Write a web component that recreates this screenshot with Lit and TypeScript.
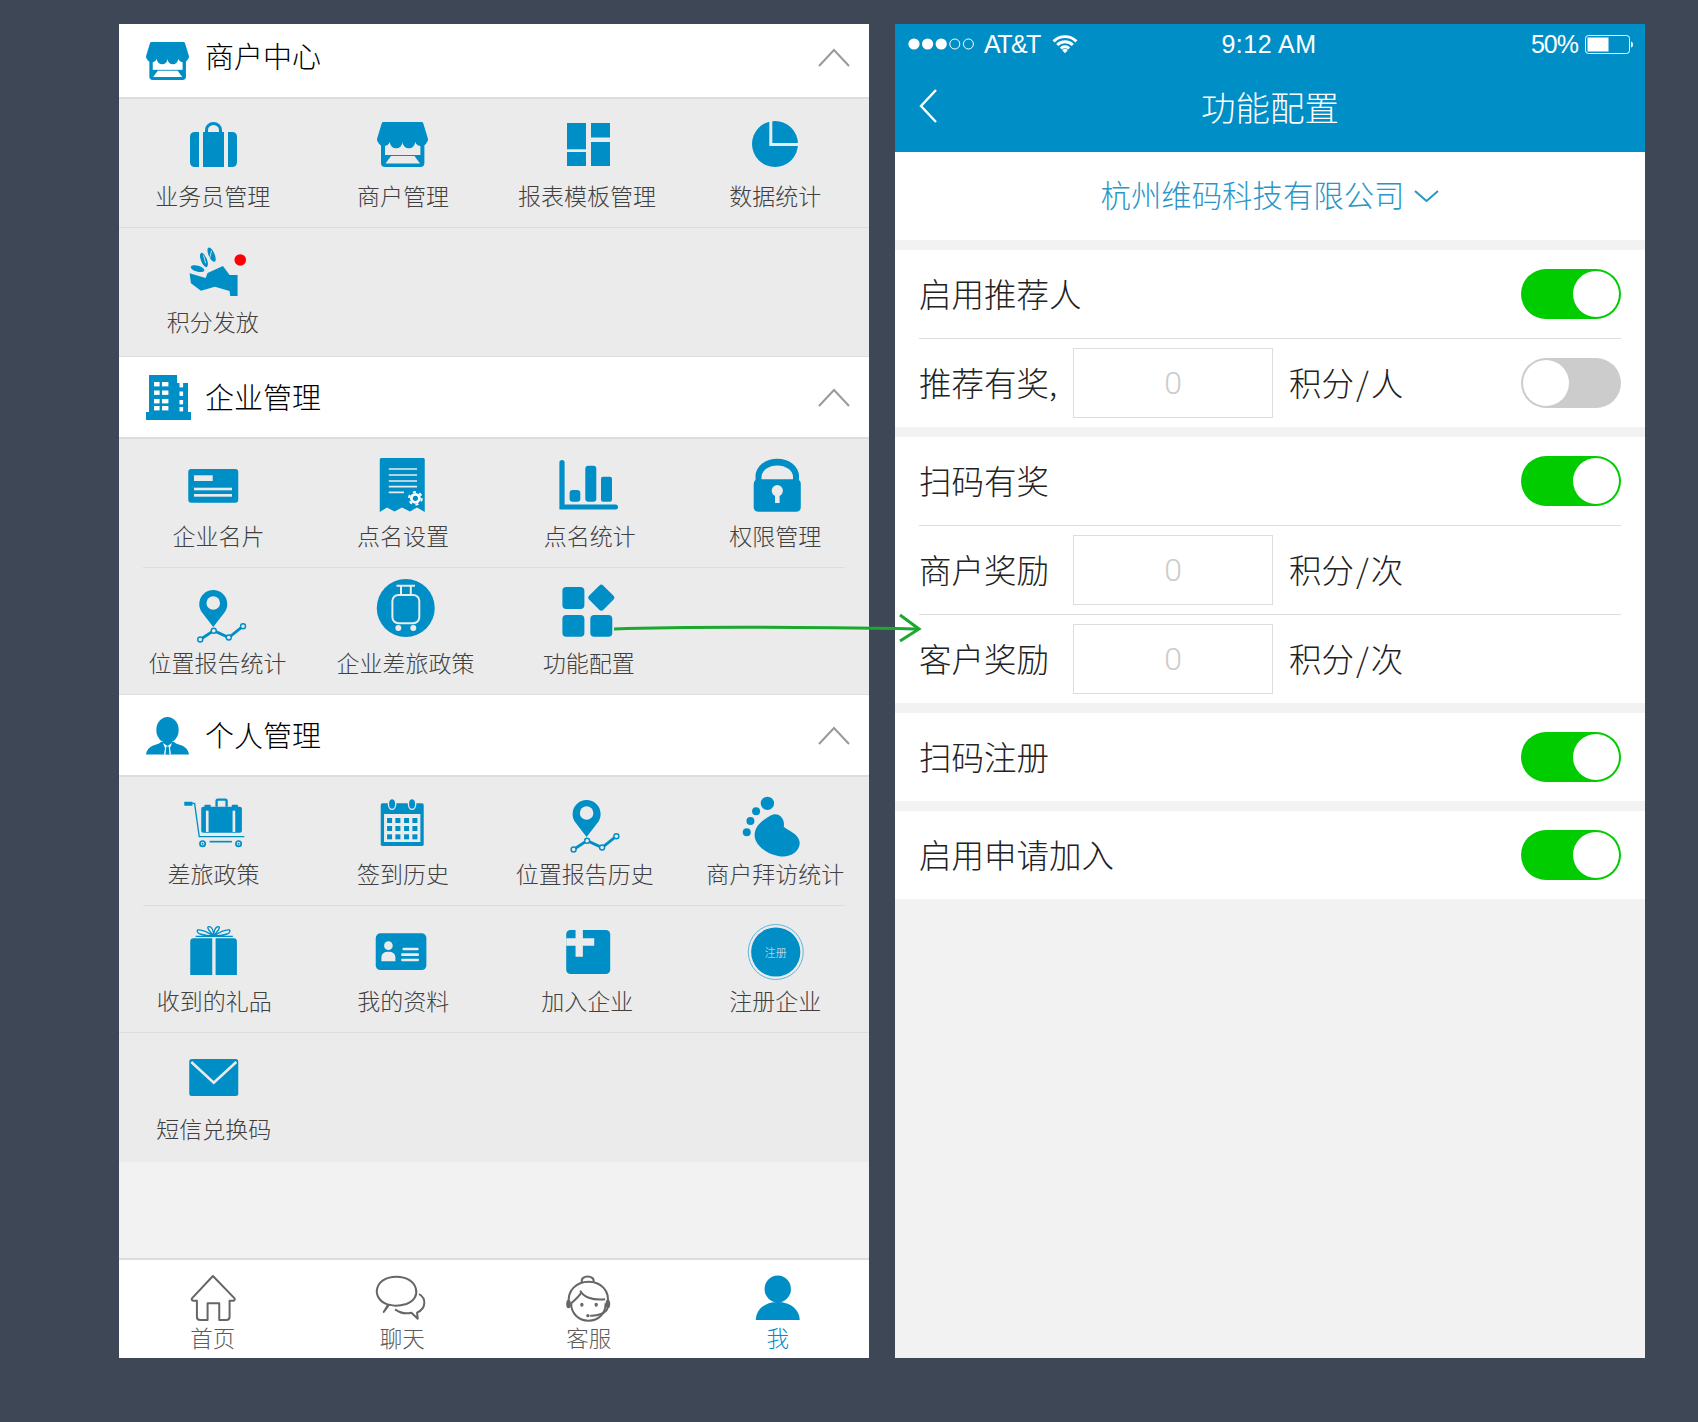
import { LitElement, html, svg, css } from 'lit';
import { customElement } from 'lit/decorators.js';

// the shop front, drawn in a 51x45 box
const shop = svg`
  <rect class="b" x="4" y="14" width="43.4" height="31" rx="4"></rect>
  <rect class="c" x="8" y="18" width="35.4" height="15"></rect>
  <path class="c" d="M8.5 41.5H43L37.5 34H14Z"></path>
  <path class="b" d="M6 0H45Q46 0 46.5 2L51 17Q51 20 50 20A6.3 6.3 0 0 1 38.2 20A6.3 6.3 0 0 1 25.5 20A6.3 6.3 0 0 1 12.8 20A6.3 6.3 0 0 1 1 20Q0 20 0 17L4.5 2Q5 0 6 0Z"></path>`;

// pin with the little route under it, cx / top give the pin's place
const pinRoute = (cx: number, top: number) => svg`
  <g transform="translate(${cx} ${top})">
    <path class="b" d="M0 37L-11 22.7A14 14 0 1 1 11 22.7Z"></path>
    <circle class="c" cy="13" r="6.8"></circle>
    <path class="ln" stroke-width="2.8" d="M-13 49.5L0.5 40.7L15.5 47.5L29.8 36.2"></path>
    <g class="dot">
      <circle cx="-13" cy="49.5" r="2.5"></circle><circle cx="0.5" cy="40.7" r="2.5"></circle>
      <circle cx="15.5" cy="47.5" r="2.5"></circle><circle cx="29.8" cy="36.2" r="2.5"></circle>
    </g>
  </g>`;

const icons: Record<string, unknown> = {
  bag: svg`
    <path class="ln" stroke-width="3" d="M33.5 19V16A7 6.5 0 0 1 47.5 16V19"></path>
    <rect class="b" x="30" y="18" width="21" height="35"></rect>
    <path class="b" d="M26 18V53H22Q17 53 17 48V23Q17 18 22 18ZM55 18V53H59Q64 53 64 48V23Q64 18 59 18Z"></path>`,
  store: svg`<g transform="translate(17 8)">${shop}</g>`,
  template: svg`
    <rect class="b" x="19" y="9" width="19" height="26.3"></rect>
    <rect class="b" x="19" y="38" width="19" height="14"></rect>
    <rect class="b" x="43" y="9" width="19" height="14.5"></rect>
    <rect class="b" x="43" y="28" width="19" height="24"></rect>`,
  pie: svg`
    <circle class="b" cx="40" cy="30" r="23"></circle>
    <path class="cs" stroke-width="3" d="M35.8 4V30.5H66"></path>`,
  hand: svg`
    <g transform="translate(7.25 0) scale(.3333)">
      <path class="b" d="M28 100L48 106L76 114L82 99L128 78L148 105H172V168H150L148 153L104 140L62 152L32 130Z"></path>
      <ellipse class="b" cx="52" cy="86" rx="21" ry="9" transform="rotate(15 52 86)"></ellipse>
      <ellipse class="b" cx="71" cy="60" rx="23" ry="9" transform="rotate(68 71 60)"></ellipse>
      <ellipse class="b" cx="94" cy="44" rx="23" ry="9" transform="rotate(66 94 44)"></ellipse>
      <path class="cs" stroke-width="2.5" d="M70 46L76 70M94 32L88 56"></path>
      <circle cx="180" cy="60" r="17.5" fill="#ff0000"></circle>
    </g>`,
  card: svg`
    <rect class="b" x="15.25" y="16" width="50" height="33.7" rx="3"></rect>
    <rect class="c" x="21" y="22.3" width="18.7" height="5.7"></rect>
    <rect class="c" x="21" y="34.7" width="38" height="2.6"></rect>
    <rect class="c" x="21" y="41" width="38" height="2.7"></rect>`,
  receipt: svg`
    <path class="b" d="M21 5H63.5Q64.75 5 64.75 6.5V59L57 54.5L50 58.5L42 54.5L34.5 58.5L27 54.5L19.75 59V6.5Q19.75 5 21 5Z"></path>
    <path class="cs" stroke-width="1.7" d="M28.75 16H57M28.75 22H57M28.75 28H57M28.75 33.7H57M28.75 39.3H44"></path>
    <circle cx="55.4" cy="45.3" r="5.4" fill="#fff"></circle>
    <circle cx="55.4" cy="45.3" r="6.4" fill="none" stroke="#fff" stroke-width="2" stroke-dasharray="3 3.7"></circle>
    <circle class="b" cx="55.4" cy="45.3" r="2.6"></circle>`,
  chart: svg`
    <path class="ln" stroke-width="5.2" stroke-linecap="round" d="M14 9.6V54H67.4"></path>
    <rect class="b" x="21.6" y="37" width="10.7" height="11.7" rx="3"></rect>
    <rect class="b" x="37.3" y="12.7" width="11" height="36" rx="3"></rect>
    <rect class="b" x="53" y="23.7" width="11" height="25" rx="2"></rect>`,
  lock: svg`
    <path class="b" d="M20.5 28V23A21.5 17 0 0 1 64 23V28H58V24A15.6 11.5 0 0 0 26.5 24V28Z"></path>
    <path class="b" d="M24 26.3H61Q65.8 26.3 65.8 31V54Q65.8 58.7 61 58.7H23.5Q18.7 58.7 18.7 54V31Q18.7 26.3 24 26.3Z"></path>
    <circle class="c" cx="42.3" cy="37.7" r="5.6"></circle>
    <rect class="c" x="40" y="38" width="4.6" height="12"></rect>`,
  pinStats: pinRoute(40.25, 10),
  trolley: svg`
    <circle class="b" cx="45.75" cy="28" r="29"></circle>
    <rect class="cs" stroke-width="2" x="32.4" y="15" width="26.9" height="28.3" rx="6"></rect>
    <path class="cs" stroke-width="2" d="M36.5 5.8H55M41 6V15M50.8 6V15"></path>
    <circle class="c" cx="38.3" cy="48" r="3"></circle>
    <circle class="c" cx="53.3" cy="48" r="3"></circle>`,
  grid: svg`
    <rect class="b" x="14.4" y="7" width="22" height="22" rx="4"></rect>
    <rect class="b" x="43.3" y="7.7" width="20" height="20" rx="3" transform="rotate(45 53.3 17.7)"></rect>
    <rect class="b" x="14.4" y="35" width="22" height="21.7" rx="4"></rect>
    <rect class="b" x="42.3" y="35" width="22" height="21.7" rx="4"></rect>`,
  cart: svg`
    <g transform="translate(2.25 -1) scale(.3333)">
      <rect class="b" x="27" y="35" width="25" height="12" rx="2"></rect>
      <path class="ln" stroke-width="4" d="M52 40H58L72 140H207"></path>
      <rect class="b" x="78" y="50" width="122" height="78" rx="6"></rect>
      <path class="ln" stroke-width="7" d="M124 50V32Q124 29 128 29H150Q154 29 154 32V50"></path>
      <rect class="c" x="92" y="62" width="8" height="64"></rect>
      <rect class="c" x="172" y="62" width="8" height="64"></rect>
      <rect class="b" x="88" y="44" width="18" height="12" rx="2"></rect>
      <rect class="b" x="170" y="44" width="18" height="12" rx="2"></rect>
      <path class="ln" stroke-width="5" d="M103 155H170"></path>
      <circle class="ln" stroke-width="5" cx="82" cy="161" r="8"></circle>
      <circle class="ln" stroke-width="5" cx="190" cy="161" r="8"></circle>
      <circle class="b" cx="82" cy="161" r="3"></circle>
      <circle class="b" cx="190" cy="161" r="3"></circle>
    </g>`,
  calendar: svg`
    <g transform="translate(-185.25 -1) scale(.3333)">
      <rect class="b" x="618" y="40" width="129" height="128" rx="5"></rect>
      <rect class="c" x="628" y="72" width="109" height="84"></rect>
      <ellipse class="b" cx="652" cy="42" rx="11" ry="16" stroke="#ebebeb" stroke-width="4"></ellipse>
      <ellipse class="b" cx="712" cy="42" rx="11" ry="16" stroke="#ebebeb" stroke-width="4"></ellipse>
      ${[84, 108, 133].map(y => [637, 662, 688, 713].map(x => svg`<rect class="b" x=${x} y=${y} width="15" height="15"></rect>`))}
    </g>`,
  pinHistory: pinRoute(38.6, 9),
  foot: svg`
    <g transform="translate(-15.25 -1) scale(.3333)">
      <circle class="b" cx="143" cy="40" r="20"></circle>
      <circle class="b" cx="109" cy="64" r="12"></circle>
      <circle class="b" cx="92" cy="93" r="12"></circle>
      <circle class="b" cx="81" cy="127" r="12"></circle>
      <path class="b" d="M150 78C175 62 197 85 192 110C205 122 240 132 240 160C238 190 205 205 175 198C135 190 100 160 105 130C108 105 130 90 150 78Z"></path>
    </g>`,
  gift: svg`
    <g transform="translate(7.25 2) scale(.3333)">
      <path class="b" d="M40 55H96V165H30V65Q30 55 40 55ZM106 55H160Q170 55 170 65V165H106Z"></path>
      <path class="ln" stroke-width="4" d="M46 49H158M100 48C80 35 60 28 52 30C45 40 70 48 100 48C130 48 155 40 148 30C140 28 120 35 100 48ZM100 48C85 30 78 20 86 20C96 20 100 35 100 48C100 35 105 20 114 20C122 20 115 30 100 48"></path>
    </g>`,
  profile: svg`
    <g transform="translate(-180.25 2) scale(.3333)">
      <rect class="b" x="588" y="40" width="152" height="110" rx="14"></rect>
      <circle class="c" cx="626" cy="77" r="13"></circle>
      <path class="c" d="M605 124V112Q605 95 626 95Q647 95 647 112V124Z"></path>
      <path class="cs" stroke-width="8" stroke-linecap="round" d="M672 87H713M668 104H714M668 120H714"></path>
    </g>`,
  join: svg`
    <g transform="translate(-367.75 2) scale(.3333)">
      <rect class="b" x="1158" y="30" width="132" height="132" rx="13"></rect>
      <path class="c" d="M1186 30H1208V55H1242V77H1208V110H1186V77H1158V55H1186Z"></path>
    </g>`,
  register: svg`
    <circle cx="40.75" cy="34" r="27.5" fill="none" stroke="#5eb6dc" stroke-width="1"></circle>
    <circle class="b" cx="40.75" cy="34" r="24.6"></circle>
    <text class="badge" x="40.75" y="38.5" text-anchor="middle">注册</text>`,
  mail: svg`
    <rect class="b" x="16.25" y="14" width="49" height="37" rx="2.5"></rect>
    <path class="cs" stroke-width="2.6" d="M18.3 17L40.75 37.7L63.3 17"></path>`,
  home: svg`
    <g transform="translate(7.25 -2) scale(.3333)">
      <path class="tab-ln" d="M98 18L163 85Q165 92 158 92H148V140Q148 150 138 150H117V100H82V150H60Q50 150 50 140V92H40Q33 92 35 85Z"></path>
    </g>`,
  chat: svg`
    <g transform="translate(-180.25 -2) scale(.3333)">
      <path class="tab-ln" d="M625 104C570 85 585 20 650 20C715 20 730 85 680 102C660 108 640 108 628 104L612 126Z"></path>
      <path class="tab-ln" d="M718 72C740 85 740 115 712 128L714 146L695 128C680 132 660 128 646 118"></path>
    </g>`,
  agent: svg`
    <g transform="translate(-367.75 -2) scale(.3333)">
      <path class="tab-ln" d="M1166 102C1160 60 1190 35 1225 35C1260 35 1290 60 1282 102"></path>
      <path class="tab-ln" d="M1205 36C1200 14 1245 14 1240 36"></path>
      <path class="tab-ln" d="M1173 100C1172 130 1195 152 1225 152C1255 152 1277 130 1276 100"></path>
      <path class="tab-ln" d="M1200 62C1208 80 1235 92 1275 88"></path>
      <path class="tab-ln" d="M1173 100C1180 92 1195 82 1203 68"></path>
      <ellipse class="tab-f" cx="1165" cy="102" rx="7" ry="13"></ellipse>
      <ellipse class="tab-f" cx="1283" cy="102" rx="7" ry="13"></ellipse>
      <ellipse class="tab-f" cx="1205" cy="104" rx="5" ry="6"></ellipse>
      <ellipse class="tab-f" cx="1248" cy="104" rx="5" ry="6"></ellipse>
      <path class="tab-ln" d="M1282 114C1280 130 1250 138 1230 137"></path>
      <circle class="tab-f" cx="1223" cy="137" r="5"></circle>
    </g>`,
  me: svg`
    <ellipse class="b" cx="42.75" cy="17" rx="13.2" ry="13.5"></ellipse>
    <path class="b" d="M20.75 48C21 38 29 30 42.75 30C56 30 64.5 38 64.75 48Z"></path>`,
};

type Item = { label: string; icon: string; dx?: number };
type Row = { h: number; pad: number; dy: number; sep?: 'full' | 'inset'; items: Item[] };

const storeHeader = svg`<g transform="translate(0 7) scale(.843)">${shop}</g>`;
const buildingHeader = svg`
  <path class="b" d="M3 1H31V9H42V38H45V46H0V38H3Z"></path>
  ${[8, 16.5, 25, 32].map(y => svg`
    <rect class="c" x="8" y=${y} width="5.6" height="4.4"></rect>
    <rect class="c" x="16" y=${y} width="6.4" height="4.4"></rect>
    <rect class="c" x="33.5" y=${y + 1} width="3.6" height="4.4"></rect>`)}`;
const personHeader = svg`
  <ellipse class="b" cx="21.5" cy="18" rx="11.2" ry="13"></ellipse>
  <path class="b" d="M0 42.5C1 36 5 34 13 31.5L15 30H28L30 31.5C38 34 42 36 43 42.5Z"></path>
  <path class="c" d="M17 31L21.5 34L26 31L24 36L25 42.5H18L19 36Z"></path>
  <path class="b" d="M20.3 34.5H22.7L23.5 42.5H19.5Z"></path>`;

const sections: { title: string; icon: unknown; cls: string; rows: Row[] }[] = [
  {
    title: '商户中心', icon: storeHeader, cls: 'h-first',
    rows: [
      { h: 128, pad: 15, dy: -2, sep: 'full', items: [
        { label: '业务员管理', icon: 'bag' },
        { label: '商户管理', icon: 'store', dx: 2.8 },
        { label: '报表模板管理', icon: 'template', dx: -0.8 },
        { label: '数据统计', icon: 'pie' },
      ] },
      { h: 128, pad: 12, dy: -2, sep: 'full', items: [{ label: '积分发放', icon: 'hand' }] },
    ],
  },
  {
    title: '企业管理', icon: buildingHeader, cls: '',
    rows: [
      { h: 128, pad: 14, dy: -1, sep: 'inset', items: [
        { label: '企业名片', icon: 'card', dx: 5.7 },
        { label: '点名设置', icon: 'receipt', dx: 2.8 },
        { label: '点名统计', icon: 'chart', dx: 1.9 },
        { label: '权限管理', icon: 'lock' },
      ] },
      { h: 126, pad: 12, dy: -1, sep: 'full', items: [
        { label: '位置报告统计', icon: 'pinStats', dx: 4.7 },
        { label: '企业差旅政策', icon: 'trolley', dx: 5.3 },
        { label: '功能配置', icon: 'grid', dx: 1 },
      ] },
    ],
  },
  {
    title: '个人管理', icon: personHeader, cls: '',
    rows: [
      { h: 128, pad: 14, dy: -1, sep: 'inset', items: [
        { label: '差旅政策', icon: 'cart', dx: 0.8 },
        { label: '签到历史', icon: 'calendar', dx: 2.8 },
        { label: '位置报告历史', icon: 'pinHistory', dx: -3 },
        { label: '商户拜访统计', icon: 'foot' },
      ] },
      { h: 126, pad: 12, dy: -1, sep: 'full', items: [
        { label: '收到的礼品', icon: 'gift', dx: 1.5 },
        { label: '我的资料', icon: 'profile', dx: 3 },
        { label: '加入企业', icon: 'join', dx: -0.6 },
        { label: '注册企业', icon: 'register' },
      ] },
      { h: 129, pad: 12, dy: 0, items: [{ label: '短信兑换码', icon: 'mail', dx: 1 }] },
    ],
  },
];

const tabs: Item[] = [
  { label: '首页', icon: 'home' },
  { label: '聊天', icon: 'chat', dx: 2 },
  { label: '客服', icon: 'agent', dx: 1 },
  { label: '我', icon: 'me', dx: 2.5 },
];

@customElement('app-root')
export class AppRoot extends LitElement {
  static styles = css`
    :host {
      display: block;
      position: relative;
      width: 1698px;
      height: 1422px;
      background: #3e4756;
      font-family: 'Noto Sans CJK SC', 'Liberation Sans', sans-serif;
      --blue: #008ec6;
      --cut: #ebebeb;
      overflow: hidden;
    }

    .page {
      display: flex;
      gap: 26px;
      padding: 24px 0 0 119px;
    }

    .panel {
      width: 750px;
      height: 1334px;
      background: #f2f2f2;
      display: flex;
      flex-direction: column;
      flex: none;
    }

    /* shared icon classes */
    .b { fill: var(--blue); }
    .c { fill: var(--cut); }
    .cs { fill: none; stroke: var(--cut); }
    .ln { fill: none; stroke: var(--blue); }
    .dot circle { fill: var(--cut); stroke: var(--blue); stroke-width: 1.4; }
    .tab-ln { fill: none; stroke: #666; stroke-width: 6; stroke-linejoin: round; }
    .tab-f { fill: #666; }
    .badge { fill: #dcecf4; font-size: 11px; font-weight: 300; }

    .head {
      --cut: #fff;
      height: 80px;
      flex: none;
      background: #fff;
      border-bottom: 2px solid #ddd;
      display: flex;
      align-items: center;
      padding: 0 19px 0 27px;
      font-size: 29px;
      color: #000;
      font-weight: 300;
    }
    .head.h-first {
      height: 68px;
      padding-bottom: 5px;
    }
    .head svg.ico {
      width: 44px;
      height: 46px;
      margin-right: 15px;
      overflow: visible;
    }
    .head span { flex: 1; margin-bottom: 3px; }
    .head.h-first span { margin-bottom: 6px; }
    .head.h-first svg.chev { margin-bottom: 2px; }

    .row {
      display: grid;
      grid-template-columns: repeat(4, 187.5px);
      background: var(--cut);
      box-sizing: border-box;
      flex: none;
    }

    .sep { height: 1px; flex: none; background: #ebebeb; }
    .sep i { display: block; height: 1px; background: #ddd; }
    .sep.inset i { margin: 0 24px; }

    .cell {
      display: flex;
      flex-direction: column;
      align-items: center;
    }
    .cell svg {
      width: 80px;
      height: 64px;
      overflow: visible;
    }
    .cell span {
      height: 30px;
      line-height: 30px;
      font-size: 23px;
      color: #404040;
      font-weight: 300;
      white-space: nowrap;
    }

    .tabbar {
      margin-top: auto;
      height: 86px;
      --cut: #fff;
      background: #fff;
      border-top: 2px solid #ddd;
      display: grid;
      grid-template-columns: repeat(4, 187.5px);
      padding-top: 12px;
      flex: none;
    }
    .tab { display: flex; flex-direction: column; align-items: center; color: #5c5c5c; }
    .tab svg { width: 80px; height: 50px; overflow: visible; }
    .tab span {
      margin-top: 2px;
      height: 26px;
      line-height: 26px;
      font-size: 22.5px;
      font-weight: 300;
    }
    .tab.on { color: var(--blue); }

    /* right phone */
    .top { background: var(--blue); color: #fff; flex: none; }
    .status {
      height: 40px;
      padding: 0 11px 0 13px;
      display: grid;
      grid-template-columns: 1fr auto 1fr;
      align-items: center;
      font-family: 'Liberation Sans', sans-serif;
      font-size: 25px;
    }
    .status .l { display: flex; align-items: center; gap: 8px; }
    .status .l b { font-weight: 400; letter-spacing: -1.6px; }
    .status .mid { margin-right: 4px; letter-spacing: 0.5px; }
    .status .r { display: flex; align-items: center; justify-content: flex-end; gap: 7px; letter-spacing: -1px; padding-right: 1px; }
    .nav {
      height: 88px;
      display: grid;
      grid-template-columns: 1fr auto 1fr;
      align-items: center;
      padding: 0 24px;
      font-size: 34.5px;
      font-weight: 300;
    }
    .nav svg { display: block; margin-bottom: 4px; }
    .nav .title { margin-bottom: 4px; }

    .company {
      height: 88px;
      flex: none;
      background: #fff;
      margin-bottom: 10px;
      display: flex;
      align-items: center;
      justify-content: center;
      gap: 10px;
      font-size: 30.4px;
      font-weight: 300;
      color: #2a96c8;
    }
    .company span { margin-bottom: 4px; }

    .group {
      background: #fff;
      margin-bottom: 10px;
      padding: 0 24px;
      flex: none;
    }
    .line {
      height: 88px;
      display: flex;
      align-items: center;
      font-size: 32.5px;
      font-weight: 300;
      color: #222;
    }
    .line + .line { border-top: 1px solid #ddd; box-sizing: content-box; }
    .line .name { width: 154px; flex: none; margin-bottom: 4px; }
    .line .name.wide { width: auto; }
    .box {
      width: 200px;
      height: 70px;
      box-sizing: border-box;
      border: 1px solid #ddd;
      display: flex;
      align-items: center;
      justify-content: center;
      color: #ccc;
      font-family: Roboto, 'Liberation Sans', sans-serif;
      font-size: 32px;
      font-weight: 300;
      flex: none;
    }
    .unit { margin: 0 0 4px 16px; }
    .unit i { font-style: normal; margin: 0 2px; }

    .switch {
      margin-left: auto;
      width: 100px;
      height: 50px;
      padding: 2px;
      box-sizing: border-box;
      border-radius: 25px;
      background: #00cc00;
      display: flex;
      justify-content: flex-end;
    }
    .switch i {
      width: 46px;
      height: 46px;
      border-radius: 50%;
      background: #fff;
    }
    .switch.off { background: #ccc; justify-content: flex-start; }

    .arrow {
      position: absolute;
      left: 0;
      top: 0;
      width: 1698px;
      height: 1422px;
      pointer-events: none;
    }
  `;

  private cell(it: Item, dy: number) {
    return html`
      <div class="cell">
        <svg viewBox="0 0 80 64">${icons[it.icon]}</svg>
        <span style="margin-left:${(it.dx ?? 0) * 2}px;margin-top:${4 + dy}px">${it.label}</span>
      </div>
    `;
  }

  private line(name: string, opts: { on?: boolean; unit?: string } = {}) {
    const toggle = opts.on !== undefined;
    const [a, b] = (opts.unit ?? '').split('/');
    return html`
      <div class="line">
        <div class="name ${opts.unit ? '' : 'wide'}">${name}</div>
        ${opts.unit ? html`<div class="box">0</div><div class="unit">${a}<i>/</i>${b}</div>` : ''}
        ${toggle ? html`<div class="switch ${opts.on ? '' : 'off'}"><i></i></div>` : ''}
      </div>
    `;
  }

  private leftPhone() {
    return html`
      <div class="panel">
        ${sections.map(s => html`
          <div class="head ${s.cls}">
            <svg class="ico" viewBox="0 0 44 46">${s.icon}</svg>
            <span>${s.title}</span>
            <svg class="chev" width="32" height="19" viewBox="0 0 32 19"><path d="M1 18L16 2L31 18" fill="none" stroke="#999" stroke-width="2"></path></svg>
          </div>
          ${s.rows.map(r => html`
            <div class="row" style="height:${r.h}px;padding-top:${r.pad}px">${r.items.map(i => this.cell(i, r.dy))}</div>
            ${r.sep ? html`<div class="sep ${r.sep}"><i></i></div>` : ''}
          `)}
        `)}
        <div class="tabbar">
          ${tabs.map((t, n) => html`
            <div class="tab ${n === 3 ? 'on' : ''}">
              <svg viewBox="0 0 80 50">${icons[t.icon]}</svg>
              <span style="margin-left:${(t.dx ?? 0) * 2}px">${t.label}</span>
            </div>
          `)}
        </div>
      </div>
    `;
  }

  private rightPhone() {
    return html`
      <div class="panel">
        <div class="top">
          <div class="status">
            <div class="l">
              <svg width="68" height="14" viewBox="0 0 68 14">
                ${[0, 1, 2].map(i => svg`<circle cx=${6 + i * 13.6} cy="7" r="5.6" fill="#fff"></circle>`)}
                ${[3, 4].map(i => svg`<circle cx=${6 + i * 13.6} cy="7" r="5" fill="none" stroke="#fff" stroke-width="1"></circle>`)}
              </svg>
              <b>AT&amp;T</b>
              <svg style="margin-left:4px" width="26" height="20" viewBox="0 0 25 18">
                <path d="M1.5 6.5A15.5 15.5 0 0 1 23.5 6.5M5 10A10.5 10.5 0 0 1 20 10M8.5 13.3A5.5 5.5 0 0 1 16.5 13.3" fill="none" stroke="#fff" stroke-width="2.8"></path>
                <path d="M12.5 18L9.8 15A3.8 3.8 0 0 1 15.2 15Z" fill="#fff"></path>
              </svg>
            </div>
            <div class="mid">9:12 AM</div>
            <div class="r">
              <span>50%</span>
              <svg width="48" height="19" viewBox="0 0 48 19">
                <rect x=".5" y=".5" width="44" height="18" rx="3" fill="none" stroke="#fff"></rect>
                <rect x="2.5" y="2.5" width="21" height="14" fill="#fff"></rect>
                <path d="M46 6.5Q48 7 48 9.5Q48 12 46 12.5Z" fill="#fff"></path>
              </svg>
            </div>
          </div>
          <div class="nav">
            <svg width="18" height="34" viewBox="0 0 18 34"><path d="M17 1L2 17L17 33" fill="none" stroke="#fff" stroke-width="2.4"></path></svg>
            <div class="title">功能配置</div>
            <div></div>
          </div>
        </div>
        <div class="company">
          <span>杭州维码科技有限公司</span>
          <svg width="25" height="12" viewBox="0 0 25 12"><path d="M1 1L12.5 11L24 1" fill="none" stroke="#2a96c8" stroke-width="2"></path></svg>
        </div>
        <div class="group">
          ${this.line('启用推荐人', { on: true })}
          ${this.line('推荐有奖,', { unit: '积分/人', on: false })}
        </div>
        <div class="group">
          ${this.line('扫码有奖', { on: true })}
          ${this.line('商户奖励', { unit: '积分/次' })}
          ${this.line('客户奖励', { unit: '积分/次' })}
        </div>
        <div class="group">${this.line('扫码注册', { on: true })}</div>
        <div class="group">${this.line('启用申请加入', { on: true })}</div>
      </div>
    `;
  }

  render() {
    return html`
      <div class="page">
        ${this.leftPhone()}
        ${this.rightPhone()}
      </div>
      <svg class="arrow" viewBox="0 0 1698 1422">
        <path d="M614 629C700 626 800 627 917 629" fill="none" stroke="#1aa82e" stroke-width="3"></path>
        <path d="M900 615L919 629L900 641" fill="none" stroke="#1aa82e" stroke-width="3"></path>
      </svg>
    `;
  }
}
